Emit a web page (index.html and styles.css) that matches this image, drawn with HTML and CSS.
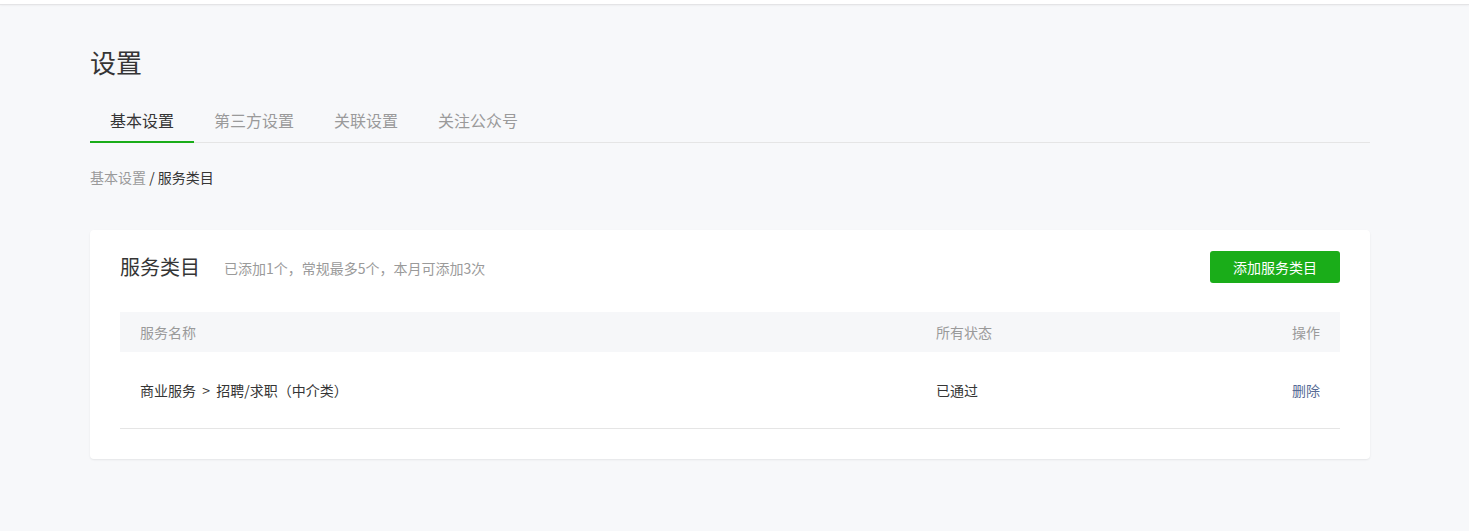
FILE: index.html
```html
<!DOCTYPE html>
<html lang="zh-CN">
<head>
<meta charset="utf-8">
<title>设置</title>
<link rel="stylesheet" href="styles.css">
</head>
<body>
<div class="topbar"></div>
<main class="page">
  <h1 class="page-title">设置</h1>
  <nav class="tabs">
    <a class="tab active">基本设置</a>
    <a class="tab">第三方设置</a>
    <a class="tab">关联设置</a>
    <a class="tab">关注公众号</a>
  </nav>
  <div class="breadcrumb"><span class="crumb-link">基本设置</span> / 服务类目</div>
  <section class="card">
    <div class="card-head">
      <h2 class="card-title">服务类目</h2>
      <span class="card-desc">已添加1个，常规最多5个，本月可添加3次</span>
      <button class="btn-primary">添加服务类目</button>
    </div>
    <div class="table">
      <div class="tr th">
        <div class="td">服务名称</div>
        <div class="td">所有状态</div>
        <div class="td right">操作</div>
      </div>
      <div class="tr row">
        <div class="td">商业服务 &nbsp;&gt;&nbsp; 招聘/求职（中介类）</div>
        <div class="td">已通过</div>
        <div class="td right"><a class="link">删除</a></div>
      </div>
    </div>
  </section>
</main>
</body>
</html>
```

FILE: styles.css
```css
* { box-sizing: border-box; }
html, body { margin: 0; padding: 0; }
body {
  background: #f7f8fa;
  font-family: "Noto Sans CJK SC", "Noto Sans", sans-serif;
  color: #353535;
  height: 531px;
  overflow: hidden;
}
.topbar {
  height: 5px;
  background: #fff;
  border-bottom: 1px solid #e4e4e6;
  box-shadow: 0 1px 2px rgba(0,0,0,0.04);
}
.page {
  width: 1280px;
  margin-left: 90px;
  padding-top: 39px;
}
.page-title {
  margin: 0;
  font-size: 26px;
  font-weight: 400;
  line-height: 36px;
  color: #353535;
}
.tabs {
  display: flex;
  margin-top: 29px;
  border-bottom: 1px solid #e5e5e5;
}
.tab {
  display: block;
  padding: 0 20px 10px;
  font-size: 16px;
  line-height: 22px;
  color: #9a9a9a;
  border-bottom: 2px solid transparent;
  margin-bottom: -1px;
}
.tab.active {
  color: #353535;
  border-bottom-color: #1aad19;
}
.breadcrumb {
  margin-top: 24px;
  font-size: 14px;
  line-height: 20px;
  color: #353535;
}
.crumb-link { color: #9a9a9a; }
.card {
  margin-top: 43px;
  background: #fff;
  border-radius: 4px;
  box-shadow: 0 1px 2px rgba(0,0,0,0.08);
  padding: 21px 30px 30px;
}
.card-head {
  display: flex;
  align-items: center;
  height: 32px;
}
.card-title {
  margin: 0;
  font-size: 20px;
  font-weight: 400;
  line-height: 28px;
  color: #353535;
}
.card-desc {
  margin-left: 24px;
  font-size: 14px;
  color: #9a9a9a;
  flex: 1;
  padding-top: 2px;
}
.btn-primary {
  width: 130px;
  height: 32px;
  border: none;
  border-radius: 3px;
  background: #1aad19;
  color: #fff;
  font-family: inherit;
  font-size: 14px;
  padding: 0;
}
.table { margin-top: 29px; }
.tr {
  display: grid;
  grid-template-columns: 796px 1fr auto;
  align-items: center;
  padding: 0 20px;
  font-size: 14px;
}
.th {
  height: 40px;
  background: #f6f7f9;
  color: #9a9a9a;
}
.row {
  height: 77px;
  border-bottom: 1px solid #e5e5e5;
  color: #353535;
}
.right { text-align: right; }
.link { color: #576b95; }
```
